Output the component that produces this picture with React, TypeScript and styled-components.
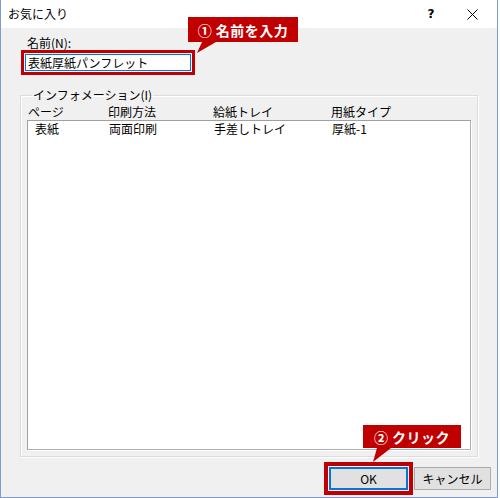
import styled, { createGlobalStyle } from 'styled-components';

const GlobalStyle = createGlobalStyle`
  html, body {
    margin: 0;
    padding: 0;
    background: #ffffff;
  }
  body {
    font-family: "Noto Sans CJK JP", "Noto Sans", sans-serif;
    font-size: 12px;
    color: #000;
  }
`;

const columns = [
  { header: 'ページ', value: '表紙' },
  { header: '印刷方法', value: '両面印刷' },
  { header: '給紙トレイ', value: '手差しトレイ' },
  { header: '用紙タイプ', value: '厚紙-1' },
];

const App = () => {
  return (
    <>
      <GlobalStyle />
      <Window>
        <TitleBar>
          <Title>お気に入り</Title>
          <TitleButtons>
            <HelpButton>?</HelpButton>
            <CloseButton>
              <svg width="11" height="11" viewBox="0 0 11 11">
                <path d="M0.5 0.5 L10.5 10.5 M10.5 0.5 L0.5 10.5" stroke="#000" strokeWidth="1" />
              </svg>
            </CloseButton>
          </TitleButtons>
        </TitleBar>

        <Body>
          <NameField>
            <FieldLabel>名前(N):</FieldLabel>
            <Highlight $border={3} $gap={1}>
              <NameInput value="表紙厚紙パンフレット" readOnly />
            </Highlight>
          </NameField>

          <GroupBox>
            <Legend>インフォメーション(I)</Legend>
            <ColumnRow $header>
              {columns.map((c, i) => (
                <Cell key={c.header} $first={i === 0} $indent={1}>
                  {c.header}
                </Cell>
              ))}
            </ColumnRow>
            <ListBox>
              <ColumnRow>
                {columns.map((c, i) => (
                  <Cell key={c.value} $first={i === 0} $indent={7}>
                    {c.value}
                  </Cell>
                ))}
              </ColumnRow>
            </ListBox>
          </GroupBox>

          <Footer>
            <Highlight $border={4} $gap={1}>
              <Button $primary>OK</Button>
            </Highlight>
            <Button>キャンセル</Button>
          </Footer>
        </Body>

        <Callout $left={187} $top={17} $width={110} $height={25} $tail={[9, 19, 11, 5]}>
          ① 名前を入力
        </Callout>
        <Callout $left={362} $top={425} $width={98} $height={23} $tail={[10, 18, 14, 4]}>
          ② クリック
        </Callout>
      </Window>
    </>
  );
};

const Window = styled.div`
  position: relative;
  width: 496px;
  height: 497px;
  border: 1px solid #7f9bd3;
  border-top: none;
  background: #f0f0f0;
  display: flex;
  flex-direction: column;
`;

const TitleBar = styled.div`
  height: 28px;
  background: #ffffff;
  display: flex;
  align-items: center;
  justify-content: space-between;
  padding: 0 0 0 7px;
`;

const Title = styled.span`
  font-size: 12px;
  line-height: 14px;
`;

const TitleButtons = styled.div`
  display: flex;
  align-items: center;
  height: 100%;
`;

const HelpButton = styled.div`
  width: 40px;
  height: 100%;
  display: flex;
  align-items: center;
  justify-content: center;
  font-family: "DejaVu Sans", sans-serif;
  font-size: 12px;
  font-weight: bold;
  margin-right: 2px;
`;

const CloseButton = styled.div`
  width: 44px;
  height: 100%;
  display: flex;
  align-items: center;
  justify-content: center;
  svg {
    display: block;
    margin-left: -6px;
  }
`;

const Body = styled.div`
  flex: 1;
  display: flex;
  flex-direction: column;
`;

const NameField = styled.div`
  display: flex;
  flex-direction: column;
  align-items: flex-start;
  margin: 8px 0 0 20px;
`;

const FieldLabel = styled.label`
  font-size: 12px;
  line-height: 14px;
  margin-left: 6px;
`;

const Highlight = styled.div<{ $border: number; $gap: number }>`
  display: inline-flex;
  border: ${(p) => p.$border}px solid #c00000;
  padding: ${(p) => p.$gap}px;
`;

const NameInput = styled.input`
  box-sizing: border-box;
  width: 166px;
  height: 17px;
  border: 1px solid #0078d7;
  background: #fff;
  padding: 0 2px;
  margin: 0;
  font-family: "Noto Sans CJK JP", sans-serif;
  font-size: 12px;
  line-height: 15px;
  color: #000;
  outline: none;
`;

const GroupBox = styled.fieldset`
  box-sizing: border-box;
  margin: 13px 19px 0 19px;
  padding: 0 6px 6px 6px;
  border: 1px solid #dcdcdc;
  box-shadow: inset 1px 1px 0 #ffffff, 1px 1px 0 #ffffff;
  min-width: 0;
`;

const Legend = styled.legend`
  font-size: 12px;
  line-height: 14px;
  padding: 0 1px;
  margin-left: 5px;
`;

const ColumnRow = styled.div<{ $header?: boolean }>`
  display: grid;
  grid-template-columns: 81px 105px 118px 1fr;
  font-size: 12px;
  line-height: 14px;
  height: 15px;
  margin-top: ${(p) => (p.$header ? 3 : 1)}px;
`;

const Cell = styled.span<{ $first: boolean; $indent: number }>`
  padding-left: ${(p) => (p.$first ? p.$indent : 0)}px;
  white-space: nowrap;
`;

const ListBox = styled.div`
  box-sizing: border-box;
  height: 330px;
  background: #ffffff;
  border: 1px solid #a0a0a0;
  border-right-color: #b0b0b0;
  border-bottom-color: #b0b0b0;
  box-shadow: 1px 1px 0 #ffffff;
`;

const Footer = styled.div`
  display: flex;
  justify-content: flex-end;
  align-items: center;
  gap: 1px;
  margin: 5px 6px 0 0;
`;

const Button = styled.button<{ $primary?: boolean }>`
  box-sizing: border-box;
  width: ${(p) => (p.$primary ? 79 : 77)}px;
  height: 23px;
  margin: 0;
  padding: 0;
  background: #e1e1e1;
  border: ${(p) => (p.$primary ? '2px solid #0078d7' : '1px solid #adadad')};
  font-family: "Noto Sans CJK JP", sans-serif;
  font-size: 12px;
  color: #000;
`;

const Callout = styled.div<{
  $left: number;
  $top: number;
  $width: number;
  $height: number;
  $tail: [number, number, number, number];
}>`
  position: absolute;
  left: ${(p) => p.$left}px;
  top: ${(p) => p.$top}px;
  width: ${(p) => p.$width}px;
  height: ${(p) => p.$height}px;
  background: #c00000;
  color: #ffffff;
  font-family: "Noto Sans CJK JP", sans-serif;
  font-size: 14px;
  font-weight: bold;
  letter-spacing: 0.5px;
  display: flex;
  align-items: center;
  justify-content: center;
  white-space: nowrap;

  &::after {
    content: '';
    position: absolute;
    left: ${(p) => p.$tail[0]}px;
    top: ${(p) => p.$height}px;
    width: ${(p) => p.$tail[1]}px;
    height: ${(p) => p.$tail[2]}px;
    background: #c00000;
    clip-path: polygon(
      ${(p) => p.$tail[3]}px 0,
      100% 0,
      0 100%
    );
  }
`;

export default App;
